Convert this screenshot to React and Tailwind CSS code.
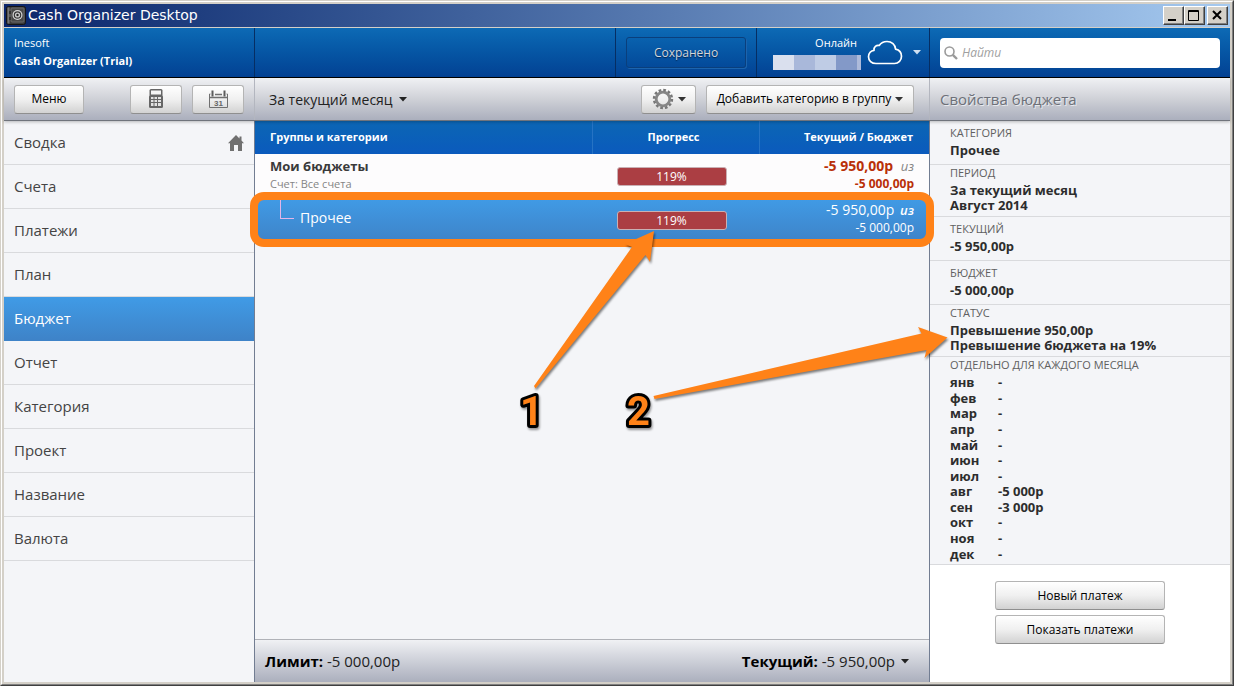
import { useState } from 'react';
import clsx from 'clsx';

const menuItems = [
  'Сводка', 'Счета', 'Платежи', 'План', 'Бюджет',
  'Отчет', 'Категория', 'Проект', 'Название', 'Валюта',
];

const months = [
  ['янв', '-'], ['фев', '-'], ['мар', '-'], ['апр', '-'],
  ['май', '-'], ['июн', '-'], ['июл', '-'], ['авг', '-5 000р'],
  ['сен', '-3 000р'], ['окт', '-'], ['ноя', '-'], ['дек', '-'],
];

const details = [
  { label: 'КАТЕГОРИЯ', lines: ['Прочее'] },
  { label: 'ПЕРИОД', lines: ['За текущий месяц', 'Август 2014'] },
  { label: 'ТЕКУЩИЙ', lines: ['-5 950,00р'] },
  { label: 'БЮДЖЕТ', lines: ['-5 000,00р'] },
  { label: 'СТАТУС', lines: ['Превышение 950,00р', 'Превышение бюджета на 19%'] },
];

/* ── Icons ── */
function Caret({ className }) {
  return (
    <svg viewBox="0 0 8 5" className={clsx('w-2 h-[5px] shrink-0', className)} aria-hidden="true">
      <path d="M0 0h8L4 4.6z" fill="currentColor" />
    </svg>
  );
}

function SafeIcon() {
  return (
    <svg viewBox="0 0 20 20" className="w-5 h-5" aria-hidden="true">
      <rect x="0.5" y="0.5" width="19" height="18" rx="2" fill="#3a3a3a" stroke="#151515" />
      <rect x="1.5" y="1.5" width="2" height="16" fill="#777" />
      <rect x="5" y="2" width="13" height="14" rx="1" fill="#484848" stroke="#6b6b6b" />
      <circle cx="11.5" cy="9" r="5" fill="#d8d8d8" />
      <circle cx="11.5" cy="9" r="3.8" fill="#333" />
      <circle cx="11.5" cy="9" r="2.6" fill="#ccc" />
      <circle cx="11.5" cy="9" r="1.2" fill="#222" />
      <path d="M4 5v3M4 11v3" stroke="#111" />
    </svg>
  );
}

function CalculatorIcon() {
  return (
    <svg viewBox="0 0 14 20" className="w-3.5 h-5" aria-hidden="true">
      <rect x="0.5" y="0" width="13" height="7" rx="1.5" fill="#666" />
      <rect x="0" y="6" width="14" height="13" rx="1.5" fill="#666" />
      <rect x="2" y="1.5" width="10" height="4" fill="#f4f4f4" />
      <path
        d="M2 8h2.500v2H2zM5.500 8h2.500v2H5.500zM9 8h3v2H9zM2 11h2.500v2H2zM5.500 11h2.500v2H5.500zM9 11h3v2H9zM2 14h2.500v3H2zM5.500 14h2.500v3H5.500zM9 14h3v3H9z"
        fill="#e2e2e2"
      />
    </svg>
  );
}

function CalendarIcon() {
  return (
    <svg viewBox="0 0 21 19" className="w-[21px] h-[19px]" aria-hidden="true">
      <path d="M2.500 4H1.500v13.500h18V4h-1" fill="none" stroke="#707070" />
      <path d="M7 4.500h7M1 7.500h19" fill="none" stroke="#707070" strokeWidth="1.500" />
      <path d="M4.500 0.500v6M16.500 0.500v6" stroke="#5c5c5c" strokeWidth="2" />
      <text x="10.500" y="16" textAnchor="middle" fontSize="8" fontWeight="700" fontFamily="Liberation Sans" fill="#666">31</text>
    </svg>
  );
}

function GearIcon() {
  return (
    <svg viewBox="0 0 22 22" className="w-[22px] h-[22px]" aria-hidden="true">
      <circle cx="11" cy="11" r="6.8" fill="none" stroke="#868686" strokeWidth="2.8" />
      <circle cx="11" cy="11" r="9" fill="none" stroke="#777" strokeWidth="2.4" strokeDasharray="2.7 2.01" />
    </svg>
  );
}

function CloudIcon() {
  return (
    <svg viewBox="0 0 36 26" className="w-9 h-[26px]" aria-hidden="true">
      <path
        d="M9 23.500C4.500 23.500 1.500 20.500 1.500 16.800C1.500 13.200 4 10.700 7 10.300C6.500 7 9.500 4.800 12.200 5.500C14 2.800 16.800 1.500 20 1.500C24.800 1.500 28.300 4.800 28.600 9.200C32 10 34.500 12.800 34.500 16.300C34.500 20.300 31.500 23.500 27.500 23.500Z"
        fill="none"
        stroke="#fff"
        strokeWidth="1.7"
        strokeLinejoin="round"
      />
    </svg>
  );
}

function SearchIcon() {
  return (
    <svg viewBox="0 0 14 14" className="w-3.5 h-3.5 shrink-0" fill="none" stroke="#9a9a9a" aria-hidden="true">
      <circle cx="5.500" cy="5.500" r="4.500" strokeWidth="1.6" />
      <path d="M8.800 8.800L13 13" strokeWidth="2.400" />
    </svg>
  );
}

function HomeIcon() {
  return (
    <svg viewBox="0 0 16 16" className="w-4 h-4" aria-hidden="true">
      <path d="M8 0L0 8.200h2V16h4v-6h4v6h4V8.200h2L13.500 5.600V1.500h-2v2z" fill="#707070" />
    </svg>
  );
}

/* ── Controls ── */
function Button({ className, children, ...props }) {
  return (
    <button
      type="button"
      className={clsx(
        'h-[29px] flex items-center justify-center rounded-[3px] border border-[#b4b4b4] border-b-[#8f8f8f] bg-linear-to-b from-white via-[#f0f0f0] to-[#d2d2d2] text-xs text-black whitespace-nowrap shrink-0',
        className
      )}
      {...props}
    >
      {children}
    </button>
  );
}

function WindowButton({ label, children }) {
  return (
    <button
      type="button"
      aria-label={label}
      className="w-[21px] h-[19px] bg-[#d4d0c8] border border-t-white border-l-white border-r-[#404040] border-b-[#404040] shadow-[inset_-1px_-1px_0_#808080]"
    >
      <svg viewBox="0 0 19 17" className="w-[19px] h-[17px]" fill="none" stroke="#000">{children}</svg>
    </button>
  );
}

function Progress({ value }) {
  return (
    <div className="w-[110px] h-[19px] mx-auto rounded-[3px] border border-[#c9b0b4] bg-[#ab3e43] text-white text-xs leading-[17px] text-center">
      {value}%
    </div>
  );
}

function TitleBar() {
  return (
    <div className="h-[23px] flex items-center bg-linear-to-r from-[#0a246a] to-[#a6caf0] px-0.5">
      <SafeIcon />
      <h1 className="flex-1 pl-0.5 text-white text-[14px] font-[family-name:'DejaVu_Sans',sans-serif]">
        Cash Organizer Desktop
      </h1>
      <WindowButton label="Свернуть">
        <path d="M4 13h8" strokeWidth="2" />
      </WindowButton>
      <WindowButton label="Развернуть">
        <path d="M3.500 3.500h10v10h-10zM3 4.500h11" />
      </WindowButton>
      <div className="w-0.5" />
      <WindowButton label="Закрыть">
        <path d="M5 4l8 8M13 4l-8 8" strokeWidth="2" />
      </WindowButton>
    </div>
  );
}

function Header() {
  return (
    <header className="mt-px h-[50px] flex border-b border-black bg-linear-to-b from-[#0d6ab5] to-[#034193] text-white">
      <div className="w-[251px] shrink-0 border-r border-[#062e63] pl-2.5 pt-1.5 text-[11px] leading-[18px]">
        <p>Inesoft</p>
        <p className="font-bold">Cash Organizer (Trial)</p>
      </div>
      <div className="flex-1 flex justify-end">
        <div className="flex items-center border-x border-[#062e63] px-2.5">
          <button
            type="button"
            className="w-[120px] h-[31px] rounded-[3px] border border-[#0a3f7c] shadow-[1px_1px_0_#1c64ae] text-xs text-[#d3d6da] text-shadow-[0_1px_1px_#00244f]"
          >
            Сохранено
          </button>
        </div>
        <div className="w-[173px] flex items-center border-r border-[#062e63] pl-4 pr-2">
          <div className="w-[88px]">
            <p className="pr-1 text-right text-[11px] leading-4">Онлайн</p>
            <div className="flex h-[15px] mt-1">
              <span className="flex-1 bg-[#dae0ee]" />
              <span className="flex-1 bg-[#a9b8da]" />
              <span className="flex-1 bg-[#bfcce5]" />
              <span className="flex-1 bg-[#8399c8]" />
              <span className="w-1 bg-[#adbada]" />
            </div>
          </div>
          <button type="button" aria-label="Синхронизация" className="flex-1 flex items-center justify-between pl-1.5">
            <CloudIcon />
            <Caret className="text-[#cfe0f2]" />
          </button>
        </div>
      </div>
      <div className="w-[300px] shrink-0 flex items-center px-2.5">
        <label className="flex-1 h-[30px] flex items-center gap-1 rounded bg-white px-1">
          <SearchIcon />
          <input
            type="text"
            aria-label="Найти"
            placeholder="Найти"
            className="flex-1 min-w-0 text-xs text-gray-800 placeholder:italic placeholder:text-[#a0a0a0] outline-none"
          />
        </label>
      </div>
    </header>
  );
}

function Toolbar() {
  return (
    <div className="relative z-10 h-[43px] flex border-b border-[#70747c] bg-linear-to-b from-[#f0f1f4] via-[#cfd1d7] to-[#abafbd] shadow-[0_1px_3px_rgba(0,0,0,0.25)]">
      <div className="w-[251px] shrink-0 flex items-center gap-2.5 px-2.5 border-r border-[#b3b6bf]">
        <Button className="w-[70px] mr-auto">Меню</Button>
        <Button className="w-[52px]" aria-label="Калькулятор"><CalculatorIcon /></Button>
        <Button className="w-[52px]" aria-label="Календарь"><CalendarIcon /></Button>
      </div>
      <div className="flex-1 flex items-center gap-2.5 pl-3.5 pr-[15px] border-r border-[#b3b6bf]">
        <label className="flex items-center gap-1.5 mr-auto text-[#222] text-[14px]">
          <select aria-label="Период" className="appearance-none bg-transparent outline-none">
            <option>За текущий месяц</option>
          </select>
          <Caret />
        </label>
        <Button className="w-[55px] gap-1" aria-label="Настройки">
          <GearIcon />
          <Caret className="text-[#333]" />
        </Button>
        <Button className="w-[208px] gap-1">
          Добавить категорию в группу
          <Caret className="text-[#333]" />
        </Button>
      </div>
      <h2 className="w-[300px] shrink-0 pl-2.5 text-[15px] leading-[42px] text-[#6d7078] text-shadow-[1px_1px_0_#e8eaee]">
        Свойства бюджета
      </h2>
    </div>
  );
}

function Sidebar({ active, onSelect }) {
  return (
    <nav className="w-[251px] shrink-0 border-r border-[#727d92] bg-[#f4f5f8]">
      {menuItems.map((item) => (
        <a
          key={item}
          href="#"
          onClick={(e) => {
            e.preventDefault();
            onSelect(item);
          }}
          className={clsx(
            'h-11 flex items-center justify-between px-2.5 text-[15px] border-b',
            item === active
              ? 'bg-linear-to-b from-[#409be6] to-[#3e83c8] border-[#3e83c8] text-white'
              : 'border-[#d9dadd] text-[#444]'
          )}
        >
          {item}
          {item === 'Сводка' && <HomeIcon />}
        </a>
      ))}
    </nav>
  );
}

function BudgetTable() {
  return (
    <table className="w-full table-fixed border-collapse">
      <colgroup>
        <col className="w-1/2" />
        <col className="w-[167px]" />
        <col />
      </colgroup>
      <thead>
        <tr className="h-[33px] bg-linear-to-b from-[#0c66b4] to-[#0b5abd] text-white text-[11px]">
          <th className="pl-[15px] text-left border-r border-[#2673c4]">Группы и категории</th>
          <th className="pr-1 border-r border-[#2673c4]">Прогресс</th>
          <th className="pr-4 text-right">Текущий / Бюджет</th>
        </tr>
      </thead>
      <tbody>
        <tr className="h-11 bg-[#fdfcfd]">
          <td className="pl-[15px] pb-0.5">
            <p className="text-[13px] leading-[18px] font-bold text-[#3a3a3a]">Мои бюджеты</p>
            <p className="text-[11px] leading-[18px] text-[#858585]">Счет: Все счета</p>
          </td>
          <td className="pr-2"><Progress value={119} /></td>
          <td className="pr-[15px] pb-0.5 text-right font-bold text-[#b93008]">
            <p className="text-[14px] leading-[18px]">
              -5 950,00р <i className="ml-1 text-[13px] font-normal text-[#858585]">из</i>
            </p>
            <p className="text-xs leading-[18px]">-5 000,00р</p>
          </td>
        </tr>
        <tr className="h-11 bg-linear-to-b from-[#409be6] to-[#3e83c8] text-white">
          <td className="pl-[25px] align-top">
            <div className="flex">
              <span className="w-3.5 h-[21px] mr-1.5 border-l border-b border-[#e3b5e8]" />
              <span className="text-[14px] leading-10">Прочее</span>
            </div>
          </td>
          <td className="pr-2"><Progress value={119} /></td>
          <td className="pr-[15px] pb-0.5 text-right">
            <p className="text-[14px] leading-[18px]">
              -5 950,00р <i className="ml-0.5 text-[13px] font-semibold">из</i>
            </p>
            <p className="text-xs leading-[18px]">-5 000,00р</p>
          </td>
        </tr>
      </tbody>
    </table>
  );
}

function Details() {
  return (
    <aside className="w-[300px] shrink-0 bg-white text-[#2d2d2d]">
      <div className="bg-[#f4f5f8]">
        {details.map(({ label, lines }) => (
          <section
            key={label}
            className={clsx(
              'pl-5 border-b border-[#d9dadd]',
              lines.length > 1 ? 'h-[52px]' : 'h-11 pt-1'
            )}
          >
            <h3 className="mb-[3px] text-[11px] leading-[15px] text-[#606060]">{label}</h3>
            {lines.map((line) => (
              <p key={line} className="text-[13px] leading-[15px] font-bold">{line}</p>
            ))}
          </section>
        ))}
        <section className="pl-5 pb-0.5 border-b border-[#d9dadd]">
          <h3 className="mb-[3px] text-[11px] leading-[15px] text-[#606060]">ОТДЕЛЬНО ДЛЯ КАЖДОГО МЕСЯЦА</h3>
          <table className="h-[187px] text-[13px] leading-[15px] font-bold">
            <tbody>
              {months.map(([month, sum]) => (
                <tr key={month}>
                  <td className="w-12">{month}</td>
                  <td>{sum}</td>
                </tr>
              ))}
            </tbody>
          </table>
        </section>
      </div>
      <div className="flex flex-col items-center gap-[5px] pt-4">
        <Button className="w-[170px]">Новый платеж</Button>
        <Button className="w-[170px]">Показать платежи</Button>
      </div>
    </aside>
  );
}

/* ── Numbered pointers drawn over the window ── */
function Pointers() {
  return (
    <svg className="absolute -top-px -left-px z-20 w-full h-full pointer-events-none" aria-hidden="true">
      <g fill="#ff8218" className="drop-shadow-[1px_2px_1px_rgba(0,0,0,0.5)]">
        <path d="M534 386L632 247L625 244L654 231L650 262L645.500 255L535.500 388.500Z" />
        <path d="M653.500 396L921.500 333.500L918 327L947.500 337.500L924.500 358L926.500 350L654.500 399Z" />
      </g>
      <g
        fill="#ff8218"
        stroke="#000"
        strokeWidth="6"
        strokeLinejoin="round"
        paintOrder="stroke"
        fontFamily="Roboto, sans-serif"
        fontWeight="700"
        fontSize="40"
        className="drop-shadow-[1px_2px_1px_rgba(0,0,0,0.4)]"
      >
        <text x="520" y="425">1</text>
        <text x="627" y="425">2</text>
      </g>
    </svg>
  );
}

export default function App() {
  const [active, setActive] = useState('Бюджет');

  return (
    <div className="relative min-h-screen flex flex-col bg-[#d4d0c8] border border-t-[#d4d0c8] border-l-[#d4d0c8] border-r-[#404040] border-b-[#404040] font-[family-name:'Open_Sans','Noto_Sans',sans-serif]">
      <div className="flex-1 flex flex-col p-0.5 border border-t-white border-l-white border-r-[#808080] border-b-[#808080]">
        <TitleBar />
        <Header />
        <Toolbar />
        <div className="flex-1 flex">
          <Sidebar active={active} onSelect={setActive} />
          <main className="relative flex-1 min-w-0 flex flex-col border-r border-[#727d92] bg-[#f4f5f8]">
            <BudgetTable />
            <div className="absolute z-10 top-[71px] -left-[5px] -right-[5px] h-[55px] rounded-[14px] border-8 border-[#ff8218] pointer-events-none" />
            <footer className="mt-auto h-[43px] flex items-center justify-between pl-2.5 pr-5 border-t border-[#b0b2b8] bg-linear-to-b from-[#f0f1f4] to-[#abafbd] text-[15px] text-[#222]">
              <p><b className="text-black">Лимит:</b> -5 000,00р</p>
              <button type="button" className="flex items-center gap-1.5">
                <span><b className="text-black">Текущий:</b> -5 950,00р</span>
                <Caret />
              </button>
            </footer>
          </main>
          <Details />
        </div>
      </div>
      <Pointers />
    </div>
  );
}
